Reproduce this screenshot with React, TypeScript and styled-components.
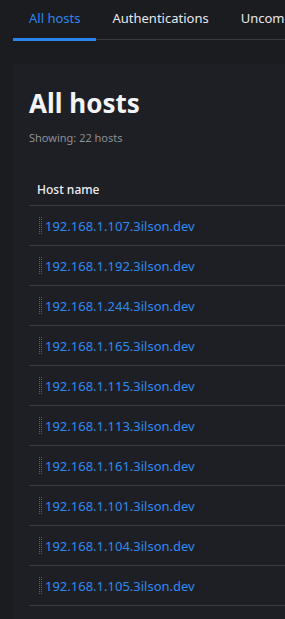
import React from "react";
import styled, { createGlobalStyle } from "styled-components";

const Global = createGlobalStyle`
  html, body { margin: 0; padding: 0; background: #1b1c20; }
  body { font-family: "Noto Sans", "Open Sans", sans-serif; overflow: hidden; }
`;

const Page = styled.div`
  width: 285px;
  height: 619px;
  overflow: hidden;
  background: #1b1c20;
  padding-left: 13px;
  box-sizing: border-box;
`;

const Inner = styled.div`
  width: 900px;
`;

const TabBar = styled.div`
  display: flex;
  height: 40px;
  border-bottom: 1px solid #3a3b40;
  box-sizing: border-box;
`;

const Tab = styled.div<{ $active?: boolean }>`
  padding: 0 16px 3px;
  display: flex;
  align-items: center;
  font-size: 13px;
  color: ${(p) => (p.$active ? "#2f86ea" : "#e6e8ec")};
  border-bottom: 3px solid ${(p) => (p.$active ? "#2a83ee" : "transparent")};
  margin-bottom: -2px;
  white-space: nowrap;
`;

const Panel = styled.div`
  margin-top: 24px;
  background: #1e1f24;
  padding: 22px 16px 0;
  min-height: 600px;
`;

const Title = styled.h1`
  margin: 0;
  font-size: 26px;
  font-weight: 700;
  color: #f2f4f8;
  line-height: 34px;
`;

const Sub = styled.div`
  margin-top: 10px;
  font-size: 11px;
  color: #8c8f96;
`;

const Table = styled.div`
  margin-top: 21px;
  width: 700px;
`;

const HeadRow = styled.div`
  height: 40px;
  box-sizing: border-box;
  padding-top: 7px;
  display: flex;
  align-items: center;
  padding-left: 8px;
  font-size: 12px;
  font-weight: 500;
  color: #eef0f4;
  border-bottom: 1px solid #3a3b40;
`;

const Row = styled.div`
  height: 40px;
  display: flex;
  align-items: center;
  padding-left: 10px;
  gap: 3px;
  border-bottom: 1px solid #3a3b40;
  box-sizing: border-box;
`;

const Link = styled.a`
  color: #2f8af0;
  font-size: 13px;
  text-decoration: none;
`;

const Handle = () => (
  <svg width="3" height="18" viewBox="0 0 3 18" style={{ flex: "none" }}>
    {Array.from({ length: 9 }).map((_, i) => (
      <g key={i} fill="#5b5e66">
        <rect x="0" y={i * 2} width="1" height="1" />
        <rect x="2" y={i * 2} width="1" height="1" />
      </g>
    ))}
  </svg>
);

const hosts = ["107", "192", "244", "165", "115", "113", "161", "101", "104", "105"];

export default function App() {
  return (
    <>
      <Global />
      <Page>
        <Inner>
          <TabBar>
            <Tab $active>All hosts</Tab>
            <Tab>Authentications</Tab>
            <Tab>Uncommon processes</Tab>
          </TabBar>
          <Panel>
            <Title>All hosts</Title>
            <Sub>Showing: 22 hosts</Sub>
            <Table>
              <HeadRow>Host name</HeadRow>
              {hosts.map((h) => (
                <Row key={h}>
                  <Handle />
                  <Link href="#">{`192.168.1.${h}.3ilson.dev`}</Link>
                </Row>
              ))}
            </Table>
          </Panel>
        </Inner>
      </Page>
    </>
  );
}
